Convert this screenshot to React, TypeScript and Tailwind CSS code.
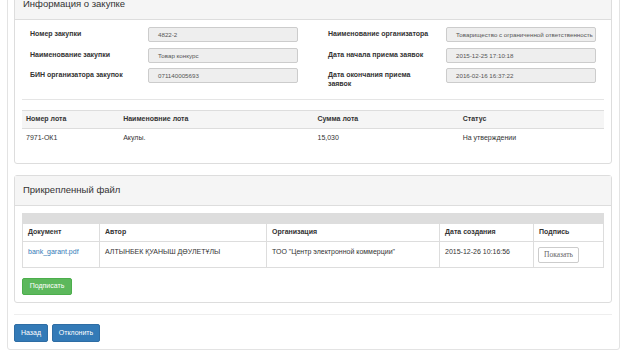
import React from 'react';

const leftFields = [
  { label: 'Номер закупки', value: '4822-2' },
  { label: 'Наименование закупки', value: 'Товар конкурс' },
  { label: 'БИН организатора закупок', value: '071140005693' },
];

const rightFields = [
  { label: 'Наименование организатора', value: 'Товарищество с ограниченной ответственность' },
  { label: 'Дата начала приема заявок', value: '2015-12-25 17:10:18' },
  { label: 'Дата окончания приема заявок', value: '2016-02-16 16:37:22' },
];

const Field: React.FC<{ label: string; value: string }> = ({ label, value }) => (
  <div className="flex h-[15px]">
    <div className="w-[118px] shrink-0 pr-[16px] pt-[2px] text-[7px] font-bold leading-[9px] text-[#333]">
      {label}
    </div>
    <div className="w-[150px] h-[15px] shrink-0 overflow-hidden whitespace-nowrap rounded-[2px] border border-[#ccc] bg-[#eee] pl-[9px] pr-[2px] text-[6.2px] leading-[13px] text-[#555]">
      {value}
    </div>
  </div>
);

const App: React.FC = () => {
  return (
    <div
      className="h-[356px] w-[624px] overflow-hidden bg-white text-[#333]"
      style={{ fontFamily: '"Liberation Sans", Arial, sans-serif' }}
    >
      {/* Внешняя панель */}
      <div className="-mt-[20px] ml-[7px] w-[613px] rounded-[3px] border border-[#e3e3e3] pt-[8px] pb-[7px]">
        {/* Панель: информация о закупке */}
        <div className="ml-[6px] w-[598px] rounded-[3px] border border-[#ddd]">
          <div className="flex h-[30px] items-center border-b border-[#ddd] bg-[#f5f5f5] px-[8px] text-[9.5px]">
            Информация о закупке
          </div>
          <div className="px-[7px] pt-[7px] pb-[16px]">
            <div className="flex pl-[8px]">
              <div className="flex flex-col gap-[5.5px]">
                {leftFields.map((f) => (
                  <Field key={f.label} label={f.label} value={f.value} />
                ))}
              </div>
              <div className="ml-[30px] flex flex-col gap-[5.5px]">
                {rightFields.map((f) => (
                  <Field key={f.label} label={f.label} value={f.value} />
                ))}
              </div>
            </div>
            <div className="mt-[16px] border-t border-[#e5e5e5]" />
            <table className="mt-[10px] w-full table-fixed border-collapse text-[7px] text-[#333]">
              <colgroup>
                <col className="w-[97px]" />
                <col className="w-[194px]" />
                <col className="w-[145px]" />
                <col className="w-[145px]" />
              </colgroup>
              <thead>
                <tr className="h-[18px] border-t border-b border-[#ddd] bg-[#f5f5f5] text-left font-bold">
                  <th className="px-[4px]">Номер лота</th>
                  <th className="px-[4px]">Наименовние лота</th>
                  <th className="px-[4px]">Сумма лота</th>
                  <th className="px-[4px]">Статус</th>
                </tr>
              </thead>
              <tbody>
                <tr className="h-[18px]">
                  <td className="px-[4px]">7971-ОК1</td>
                  <td className="px-[4px]">Акулы.</td>
                  <td className="px-[4px] text-[#333]">15,030</td>
                  <td className="px-[4px]">На утверждении</td>
                </tr>
              </tbody>
            </table>
          </div>
        </div>

        {/* Панель: прикрепленный файл */}
        <div className="mt-[11px] ml-[6px] w-[598px] rounded-[3px] border border-[#ddd]">
          <div className="flex h-[30px] items-center border-b border-[#ddd] bg-[#f5f5f5] px-[8px] text-[9.5px]">
            Прикрепленный файл
          </div>
          <div className="px-[7px] pt-[7px] pb-[7px]">
            <div className="h-[10px] bg-[#ddd]" />
            <table className="w-full table-fixed border-collapse border border-[#ddd] text-[7px]">
              <colgroup>
                <col className="w-[77px]" />
                <col className="w-[167px]" />
                <col className="w-[173px]" />
                <col className="w-[94px]" />
                <col className="w-[70px]" />
              </colgroup>
              <thead>
                <tr className="h-[18px] text-left font-bold">
                  <th className="border border-[#ddd] px-[5px]">Документ</th>
                  <th className="border border-[#ddd] px-[5px]">Автор</th>
                  <th className="border border-[#ddd] px-[5px]">Организация</th>
                  <th className="border border-[#ddd] px-[5px]">Дата создания</th>
                  <th className="border border-[#ddd] px-[5px]">Подпись</th>
                </tr>
              </thead>
              <tbody>
                <tr className="h-[26px] align-top">
                  <td className="border border-[#ddd] px-[5px] pt-[5px] text-[#337ab7]">bank_garant.pdf</td>
                  <td className="border border-[#ddd] px-[5px] pt-[5px]">АЛТЫНБЕК ҚУАНЫШ ДӨУЛЕТҰЛЫ</td>
                  <td className="border border-[#ddd] px-[5px] pt-[5px]">ТОО "Центр электронной коммерции"</td>
                  <td className="border border-[#ddd] px-[5px] pt-[5px]">2015-12-26 10:16:56</td>
                  <td className="border border-[#ddd] px-[4px] pt-[5px]">
                    <button
                      className="h-[16px] w-[41px] rounded-[2px] border border-[#ccc] bg-white text-[7.5px] text-[#666]"
                      style={{ fontFamily: '"Liberation Serif", serif' }}
                    >
                      Показать
                    </button>
                  </td>
                </tr>
              </tbody>
            </table>
            <button className="mt-[10px] h-[17px] w-[50px] rounded-[2px] border border-[#4cae4c] bg-[#5cb85c] text-[7px] text-white">
              Подписать
            </button>
          </div>
        </div>

        <div className="mt-[11px] ml-[6px] w-[598px] border-t border-[#eee]" />

        <div className="mt-[9px] ml-[6px] flex gap-[4px]">
          <button className="h-[18px] w-[34px] rounded-[2px] border border-[#2e6da4] bg-[#337ab7] text-[7px] text-white">
            Назад
          </button>
          <button className="h-[18px] w-[48px] rounded-[2px] border border-[#2e6da4] bg-[#337ab7] text-[7px] text-white">
            Отклонить
          </button>
        </div>
      </div>
    </div>
  );
};

export default App;
